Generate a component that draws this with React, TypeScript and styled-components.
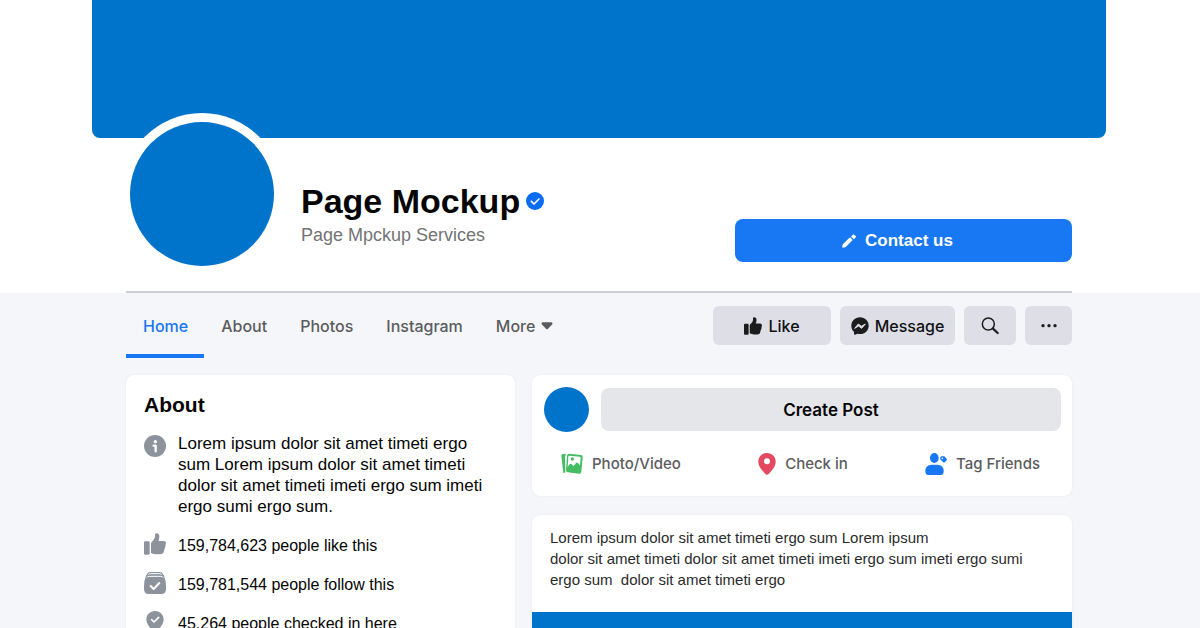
import React from "react";
import styled, { createGlobalStyle } from "styled-components";

const brand = "#0073cb";
const accent = "#1877f2";
const sans = '"Liberation Sans", Arial, sans-serif';
const ui = 'Inter, "Liberation Sans", sans-serif';

const GlobalStyle = createGlobalStyle`
  *, *::before, *::after { box-sizing: border-box; }
  body { margin: 0; background: #f5f6f9; font-family: ${sans}; color: #050505; }
  h1, h2, p, ul { margin: 0; padding: 0; }
  button { border: 0; padding: 0; cursor: pointer; }
  svg { display: block; flex: none; }
`;

const Page = styled.div`
  height: 100vh;
  overflow: hidden;
`;

const Header = styled.header`
  background: #fff;
  padding: 0 94px 0 92px;
`;

const Cover = styled.div`
  height: 138px;
  background: ${brand};
  border-radius: 0 0 8px 8px;
`;

const Profile = styled.div`
  display: flex;
  align-items: flex-start;
  margin: 0 34px;
  height: 155px;
  border-bottom: 2px solid #cdced3;
`;

const Avatar = styled.div<{ $size: number; $ring?: number }>`
  flex: none;
  width: ${(p) => p.$size}px;
  height: ${(p) => p.$size}px;
  border-radius: 50%;
  background: ${brand};
  box-shadow: 0 0 0 ${(p) => p.$ring ?? 0}px #fff;
`;

const ProfileAvatar = styled(Avatar)`
  margin: -16px 27px 0 4px;
`;

const Identity = styled.div`
  flex: 1;
  padding-top: 43px;
`;

const NameRow = styled.div`
  display: flex;
  align-items: center;
  gap: 6px;
`;

const Name = styled.h1`
  font-size: 34px;
  line-height: 40px;
  font-weight: 700;
  white-space: nowrap;
`;

const Tagline = styled.p`
  font-size: 18px;
  line-height: 24px;
  padding-top: 2px;
  color: #737376;
`;

const ContactButton = styled.button`
  display: flex;
  align-items: center;
  justify-content: center;
  gap: 9px;
  flex: 0 1 337px;
  height: 43px;
  margin-top: 81px;
  padding-right: 12px;
  border-radius: 8px;
  background: ${accent};
  color: #fff;
  font: 700 17px/20px ${sans};
`;

const Bar = styled.div`
  display: flex;
  justify-content: space-between;
  align-items: flex-start;
  padding: 0 128px 0 126px;
  height: 82px;
`;

const Tabs = styled.nav`
  display: flex;
  height: 65px;
`;

const Tab = styled.a<{ $active?: boolean }>`
  display: flex;
  align-items: center;
  gap: 6px;
  padding: 4px 16px 0 17px;
  border-bottom: 4px solid ${(p) => (p.$active ? accent : "transparent")};
  color: ${(p) => (p.$active ? accent : "#5b5c60")};
  font: 500 16px/20px ${ui};
  text-decoration: none;
`;

const Actions = styled.div`
  display: flex;
  gap: 9px;
  padding-top: 13px;
`;

const ActionButton = styled.button<{ $width: number }>`
  display: flex;
  align-items: center;
  justify-content: center;
  gap: 6px;
  width: ${(p) => p.$width}px;
  height: 39px;
  border-radius: 6px;
  background: #dddee6;
  color: #111113;
  font: 500 16px/20px ${ui};
`;

const Columns = styled.main`
  display: grid;
  grid-template-columns: 389fr 540fr;
  gap: 17px;
  padding: 0 128px 0 126px;
`;

const Stack = styled.div`
  display: flex;
  flex-direction: column;
  gap: 19px;
`;

const Card = styled.section`
  background: #fff;
  border-radius: 8px;
  box-shadow: 0 0 2px #00000014;
  overflow: hidden;
`;

const AboutCard = styled(Card)`
  padding: 18px;
`;

const CardTitle = styled.h2`
  font-size: 21px;
  line-height: 24px;
  font-weight: 700;
`;

const Facts = styled.ul`
  list-style: none;
  padding-top: 16px;
`;

const Fact = styled.li`
  display: flex;
  gap: 12px;
  font-size: 16px;
  line-height: 21px;
  padding-bottom: 16px;
`;

const Summary = styled(Fact)`
  font-size: 17px;

  svg {
    margin-top: 2px;
  }
`;

const SummaryText = styled.p`
  white-space: pre-line;
`;

const Count = styled.p`
  height: 23px;
  padding-top: 2px;
`;

const ComposerCard = styled(Card)`
  padding: 12px 11px 20px 12px;
`;

const ComposerTop = styled.div`
  display: flex;
  align-items: center;
  gap: 12px;
`;

const CreateButton = styled.button`
  flex: 1;
  height: 43px;
  border-radius: 8px;
  background: #e4e6ea;
  color: #050505;
  font: 600 17px/20px ${ui};
`;

const ComposerActions = styled.div`
  display: flex;
  justify-content: space-between;
  padding: 20px 21px 0 17px;
`;

const ComposerAction = styled.button`
  display: flex;
  align-items: center;
  gap: 9px;
  background: none;
  color: #5b5c60;
  font: 500 15px/24px ${ui};
`;

const PostText = styled.p`
  padding: 12px 18px 22px;
  font-size: 15px;
  line-height: 21px;
  color: #2b2b2d;
  white-space: pre-wrap;
`;

const PostImage = styled.div`
  height: 280px;
  background: ${brand};
`;

const Verified = () => (
  <svg width="18" height="18" viewBox="0 0 54 54" aria-label="Verified">
    <circle cx="27" cy="27" r="27" fill="#0a6cf5" />
    <path d="M16 28l8 8 15-15" fill="none" stroke="#fff" strokeWidth="5" strokeLinecap="round" strokeLinejoin="round" />
  </svg>
);

const Pencil = () => (
  <svg width="14" height="14" viewBox="0 0 42 42" fill="#fff">
    <path d="M1 41q-1-7 2-11L24 10l8 8-20 20q-4 3-11 3z" />
    <path d="M27 8l5-6q2-2 4 0l5 4q2 2 0 4l-5 6z" />
  </svg>
);

const Thumb = ({ size, color }: { size: number; color: string }) => (
  <svg width={size} height={size} viewBox="0 0 66 66" fill={color}>
    <rect x="0" y="25" width="17" height="40" rx="4" />
    <path d="M21 32q0-4 3-6l6-7q3-4 3-9l0-5q0-4 4-4 9 0 9 10 0 6-3 13h16q7 0 7 7 0 3-2 5 1 3 0 6-1 3-2 4 0 4-2 6 0 12-12 12H37q-9 0-16-4z" />
  </svg>
);

const Messenger = () => (
  <svg width="18" height="18" viewBox="0 0 54 54">
    <path d="M27 1C12 1 1 12 1 26c0 8 3 14 8 18v6q0 4 4 3l6-3q4 1 8 1c15 0 26-11 26-25S42 1 27 1z" fill="#1c1c1e" />
    <path d="M11 34l11-13 9 7 12-7-11 13-9-7z" fill="#dddee6" stroke="#dddee6" strokeWidth="3" strokeLinejoin="round" />
  </svg>
);

const Search = () => (
  <svg width="18" height="18" viewBox="0 0 54 54" fill="none" stroke="#1c1c1e" strokeLinecap="round">
    <circle cx="22" cy="21" r="18" strokeWidth="4.5" />
    <path d="M36 35l14 13" strokeWidth="6.5" />
  </svg>
);

const Dots = () => (
  <svg width="16" height="4" viewBox="0 0 48 12" fill="#1c1c1e">
    <circle cx="6" cy="5" r="5" />
    <circle cx="24" cy="5" r="5" />
    <circle cx="42" cy="5" r="5" />
  </svg>
);

const Caret = () => (
  <svg width="12" height="8" viewBox="0 0 36 24" fill="#5b5c60">
    <path d="M4 1h28q4 2 2 6L21 20q-3 3-6 0L2 7Q0 3 4 1z" />
  </svg>
);

const Info = () => (
  <svg width="22" height="22" viewBox="0 0 66 66">
    <circle cx="33" cy="33" r="33" fill="#8c939d" />
    <circle cx="34" cy="20" r="5" fill="#fff" />
    <path d="M29 32h6v17" fill="none" stroke="#fff" strokeWidth="7" strokeLinecap="round" strokeLinejoin="round" />
  </svg>
);

const Follow = () => (
  <svg width="22" height="22" viewBox="0 0 66 66">
    <path d="M20 0h26q8 0 11 6 4 4 5 12 4 8 4 24v8q0 16-14 16H14Q0 66 0 50v-8q0-16 4-24 1-8 5-12 3-6 11-6z" fill="#8c939d" />
    <path d="M13 8q2-3 7-3h26q5 0 7 3M8 17q2-4 8-4h34q6 0 8 4" fill="none" stroke="#fff" strokeWidth="3" />
    <path d="M20 42l9 9 17-18" fill="none" stroke="#fff" strokeWidth="6" strokeLinecap="round" strokeLinejoin="round" />
  </svg>
);

const CheckedPin = () => (
  <svg width="22" height="22" viewBox="0 0 66 66">
    <path d="M33 0C18 0 7 11 7 25c0 15 12 26 22 38q4 5 8 0c10-12 22-23 22-38C59 11 48 0 33 0z" fill="#8c939d" />
    <path d="M23 26l7 7 14-14" fill="none" stroke="#fff" strokeWidth="5" strokeLinecap="round" strokeLinejoin="round" />
  </svg>
);

const Photo = () => (
  <svg width="22" height="22" viewBox="0 0 66 66" fill="none">
    <path d="M3 4l12-2-3 10 1 46-6 3q-2-20-6-52 0-4 2-5z" fill="#45bd62" />
    <path d="M24 2l36 4q6 1 5 7l-4 43q-1 7-7 6l-34-4q-5-1-5-6l3-44q1-6 6-6z" fill="#45bd62" />
    <path d="M25 8l31 3q3 1 3 4l-2 22-7-8q-3-2-5 1l-7 9-7-6q-3-2-5 1l-6 8 2-31q0-3 3-3z" fill="#fff" />
    <circle cx="34" cy="18" r="5" fill="#45bd62" />
  </svg>
);

const Pin = () => (
  <svg width="18" height="22" viewBox="0 0 54 66">
    <path d="M27 0C12 0 1 11 1 26c0 15 12 26 21 37q5 5 10 0c9-11 21-22 21-37C53 11 42 0 27 0z" fill="#e34a60" />
    <circle cx="27" cy="25" r="9" fill="#fff" />
  </svg>
);

const TagFriend = () => (
  <svg width="22" height="22" viewBox="0 0 66 66" fill={accent}>
    <ellipse cx="28" cy="15" rx="13" ry="15" />
    <path d="M20 35h17q19 0 19 20 0 11-9 11H10Q1 66 1 55q0-20 19-20z" />
    <path d="M46 13q1-3 4-3l7 0q2 0 3 2l5 6q2 2 0 4l-6 6q-2 2-4 0l-8-8q-2-3-1-7z" />
    <circle cx="52" cy="16" r="2.5" fill="#fff" />
  </svg>
);

const tabs = ["Home", "About", "Photos", "Instagram"];

export default function App() {
  return (
    <Page>
      <GlobalStyle />
      <Header>
        <Cover />
        <Profile>
          <ProfileAvatar $size={144} $ring={9} />
          <Identity>
            <NameRow>
              <Name>Page Mockup</Name>
              <Verified />
            </NameRow>
            <Tagline>Page Mpckup Services</Tagline>
          </Identity>
          <ContactButton>
            <Pencil />
            Contact us
          </ContactButton>
        </Profile>
      </Header>
      <Bar>
        <Tabs>
          {tabs.map((t, i) => (
            <Tab key={t} href="#" $active={i === 0}>
              {t}
            </Tab>
          ))}
          <Tab href="#">
            More
            <Caret />
          </Tab>
        </Tabs>
        <Actions>
          <ActionButton $width={118}>
            <Thumb size={18} color="#1c1c1e" />
            Like
          </ActionButton>
          <ActionButton $width={115}>
            <Messenger />
            Message
          </ActionButton>
          <ActionButton $width={52} aria-label="Search">
            <Search />
          </ActionButton>
          <ActionButton $width={47} aria-label="More options">
            <Dots />
          </ActionButton>
        </Actions>
      </Bar>
      <Columns>
        <AboutCard>
          <CardTitle>About</CardTitle>
          <Facts>
            <Summary>
              <Info />
              <SummaryText>
                {"Lorem ipsum dolor sit amet timeti ergo\nsum Lorem ipsum dolor sit amet timeti\ndolor sit amet timeti imeti ergo sum imeti\nergo sumi ergo sum."}
              </SummaryText>
            </Summary>
            <Fact>
              <Thumb size={22} color="#8c939d" />
              <Count>159,784,623 people like this</Count>
            </Fact>
            <Fact>
              <Follow />
              <Count>159,781,544 people follow this</Count>
            </Fact>
            <Fact>
              <CheckedPin />
              <Count>45,264 people checked in here</Count>
            </Fact>
          </Facts>
        </AboutCard>
        <Stack>
          <ComposerCard>
            <ComposerTop>
              <Avatar $size={45} />
              <CreateButton>Create Post</CreateButton>
            </ComposerTop>
            <ComposerActions>
              <ComposerAction>
                <Photo />
                Photo/Video
              </ComposerAction>
              <ComposerAction>
                <Pin />
                Check in
              </ComposerAction>
              <ComposerAction>
                <TagFriend />
                Tag Friends
              </ComposerAction>
            </ComposerActions>
          </ComposerCard>
          <Card>
            <PostText>
              {"Lorem ipsum dolor sit amet timeti ergo sum Lorem ipsum\ndolor sit amet timeti dolor sit amet timeti imeti ergo sum imeti ergo sumi\nergo sum  dolor sit amet timeti ergo"}
            </PostText>
            <PostImage />
          </Card>
        </Stack>
      </Columns>
    </Page>
  );
}
